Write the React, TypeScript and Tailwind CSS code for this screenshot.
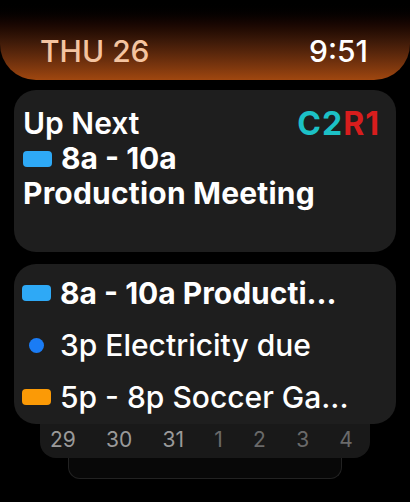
import React from "react";

const font = { fontFamily: "Inter, 'Noto Sans', sans-serif" };

function Bar({ color }: { color: string }) {
  return <span className={`inline-block w-[29px] h-[16px] rounded-[4px] shrink-0 ${color}`} />;
}

export default function App() {
  const dates = [
    { d: "29", c: "text-[#9a9a9a]" },
    { d: "30", c: "text-[#9a9a9a]" },
    { d: "31", c: "text-[#9a9a9a]" },
    { d: "1", c: "text-[#6a6a6a]" },
    { d: "2", c: "text-[#6a6a6a]" },
    { d: "3", c: "text-[#6a6a6a]" },
    { d: "4", c: "text-[#6a6a6a]" },
  ];

  return (
    <div className="w-[410px] h-[502px] bg-black overflow-hidden flex flex-col" style={font}>
      {/* Status band */}
      <div className="h-[80px] shrink-0 rounded-b-[36px] bg-gradient-to-b from-black via-[#3a1808] to-[#a0470f] flex items-end justify-between px-[40px] pb-[14px]">
        <span className="text-[30px] leading-[30px] font-medium text-[#f4c4a0]">THU 26</span>
        <span className="text-[30px] leading-[30px] font-medium text-white mr-[2px]">9:51</span>
      </div>

      {/* Up Next card */}
      <div className="mt-[10px] mx-[14px] h-[162px] shrink-0 rounded-[22px] bg-[#1e1e1e] px-[9px] pt-[16px]">
        <div className="flex items-center justify-between">
          <span className="text-[30px] leading-[35px] font-semibold text-white">Up Next</span>
          <span className="text-[32px] leading-[35px] font-bold tracking-[1px] mr-[7px]">
            <span className="text-[#1cc1c6]">C2</span>
            <span className="text-[#d81d1d]">R1</span>
          </span>
        </div>
        <div className="flex items-center gap-[9px]">
          <Bar color="bg-[#2ea9f6]" />
          <span className="text-[30px] leading-[35px] font-bold text-white">8a - 10a</span>
        </div>
        <div className="text-[30px] leading-[35px] font-bold text-white tracking-[0.2px]">Production Meeting</div>
      </div>

      {/* Event list card */}
      <div className="relative z-10 mt-[12px] mx-[14px] h-[160px] shrink-0 rounded-[22px] bg-[#1e1e1e] px-[8px] pt-[12px] flex flex-col gap-[18px]">
        <div className="flex items-center gap-[9px]">
          <Bar color="bg-[#2ea9f6]" />
          <span className="text-[30px] leading-[34px] font-bold text-white whitespace-nowrap">8a - 10a Producti...</span>
        </div>
        <div className="flex items-center gap-[9px]">
          <span className="w-[29px] flex justify-center shrink-0">
            <span className="w-[15px] h-[15px] rounded-full bg-[#1a7cf5]" />
          </span>
          <span className="text-[30px] leading-[34px] font-medium text-white whitespace-nowrap">3p Electricity due</span>
        </div>
        <div className="flex items-center gap-[9px]">
          <Bar color="bg-[#fb9a06]" />
          <span className="text-[30px] leading-[34px] font-medium text-white whitespace-nowrap">5p - 8p Soccer Ga...</span>
        </div>
      </div>

      {/* Stacked cards behind */}
      <div className="mx-[40px] h-[34px] shrink-0 rounded-b-[16px] bg-[#191919] flex items-center justify-between pl-[10px] pr-[17px] pb-[2px]">
        {dates.map((x) => (
          <span key={x.d} className={`text-[21px] leading-[24px] ${x.c}`}>{x.d}</span>
        ))}
      </div>
      <div className="mx-[68px] h-[21px] shrink-0 rounded-b-[12px] border border-t-0 border-[#222222] bg-[#080808]" />
    </div>
  );
}
